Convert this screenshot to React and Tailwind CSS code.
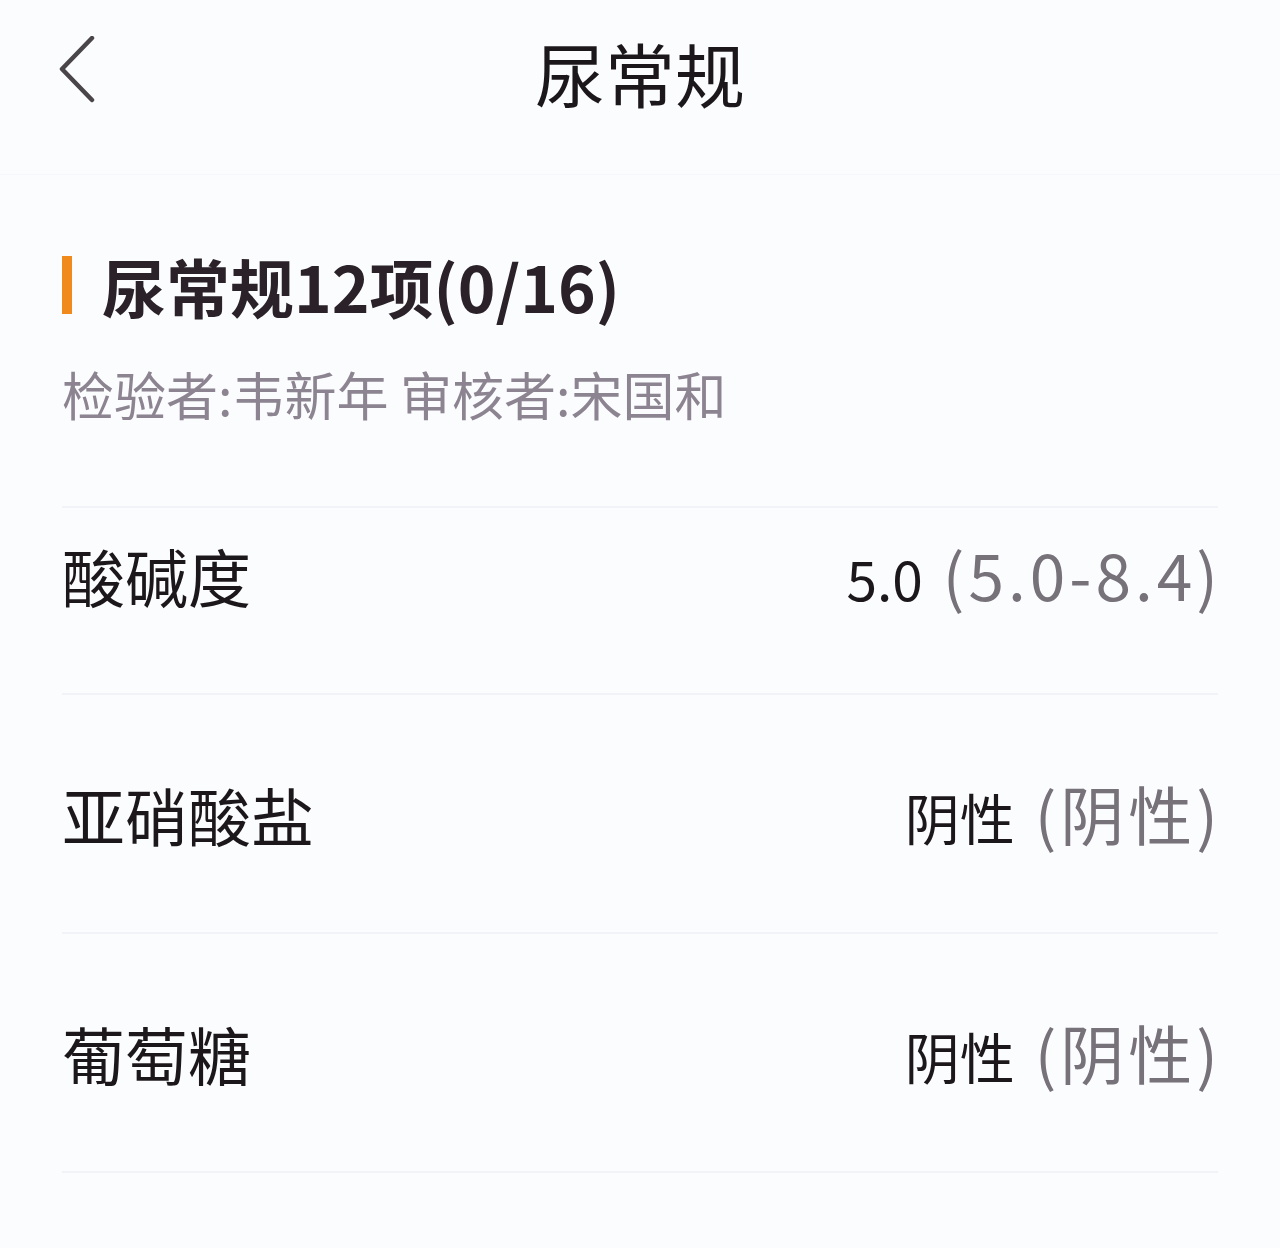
const rows = [
  { name: '酸碱度', value: '5.0', range: '(5.0-8.4)' },
  { name: '亚硝酸盐', value: '阴性', range: '(阴性)' },
  { name: '葡萄糖', value: '阴性', range: '(阴性)' },
]

function BackIcon() {
  return (
    <svg width="40" height="68" viewBox="0 0 40 68" fill="none">
      <path
        d="M34 2 L4 33 L34 64"
        stroke="#4a4548"
        strokeWidth="4.5"
        strokeLinecap="round"
        strokeLinejoin="round"
      />
    </svg>
  )
}

export default function App() {
  return (
    <div
      className="min-h-[1248px] w-[1280px] bg-[#fbfcfe] text-[#1f1a1e]"
      style={{ fontFamily: '"Noto Sans CJK SC", "Noto Sans", sans-serif' }}
    >
      {/* Header */}
      <div className="relative flex h-[175px] items-start justify-center border-b border-[#f5f7fa] pt-[28px]">
        <div className="absolute left-[58px] top-[36px]">
          <BackIcon />
        </div>
        <h1 className="text-[70px] leading-[90px] font-normal text-[#1c171b]">尿常规</h1>
      </div>

      {/* Section heading */}
      <div className="px-[62px] pt-[70px]">
        <div className="flex items-center">
          <span className="h-[58px] w-[10px] bg-[#f08a1c]" />
          <h2 className="ml-[30px] text-[64px] leading-[80px] font-bold text-[#2a2228]">
            尿常规12项(0/16)
          </h2>
        </div>
        <p className="mt-[34px] text-[52px] leading-[70px] text-[#8c8490]">
          检验者:韦新年 审核者:宋国和
        </p>
      </div>

      <div className="mx-[62px] mt-[77px] border-b-2 border-[#f1f3f8]" />

      {/* Rows */}
      <div className="px-[62px]">
        {rows.map((r, i) => (
          <div
            key={r.name}
            className={`flex items-center justify-between border-b-2 border-[#f1f3f8] ${
              i === 0 ? 'h-[187px] pb-[52px]' : 'h-[239px]'
            }`}
          >
            <span className="text-[63px] leading-[80px] text-[#1c171b]">{r.name}</span>
            <span className="flex items-baseline">
              <span className="text-[55px] leading-[80px] text-[#1c171b]">{r.value}</span>
              <span className="-mr-[4px] ml-[20px] text-[64px] leading-[80px] tracking-[4px] text-[#77717a]">
                {r.range}
              </span>
            </span>
          </div>
        ))}
      </div>
    </div>
  )
}
